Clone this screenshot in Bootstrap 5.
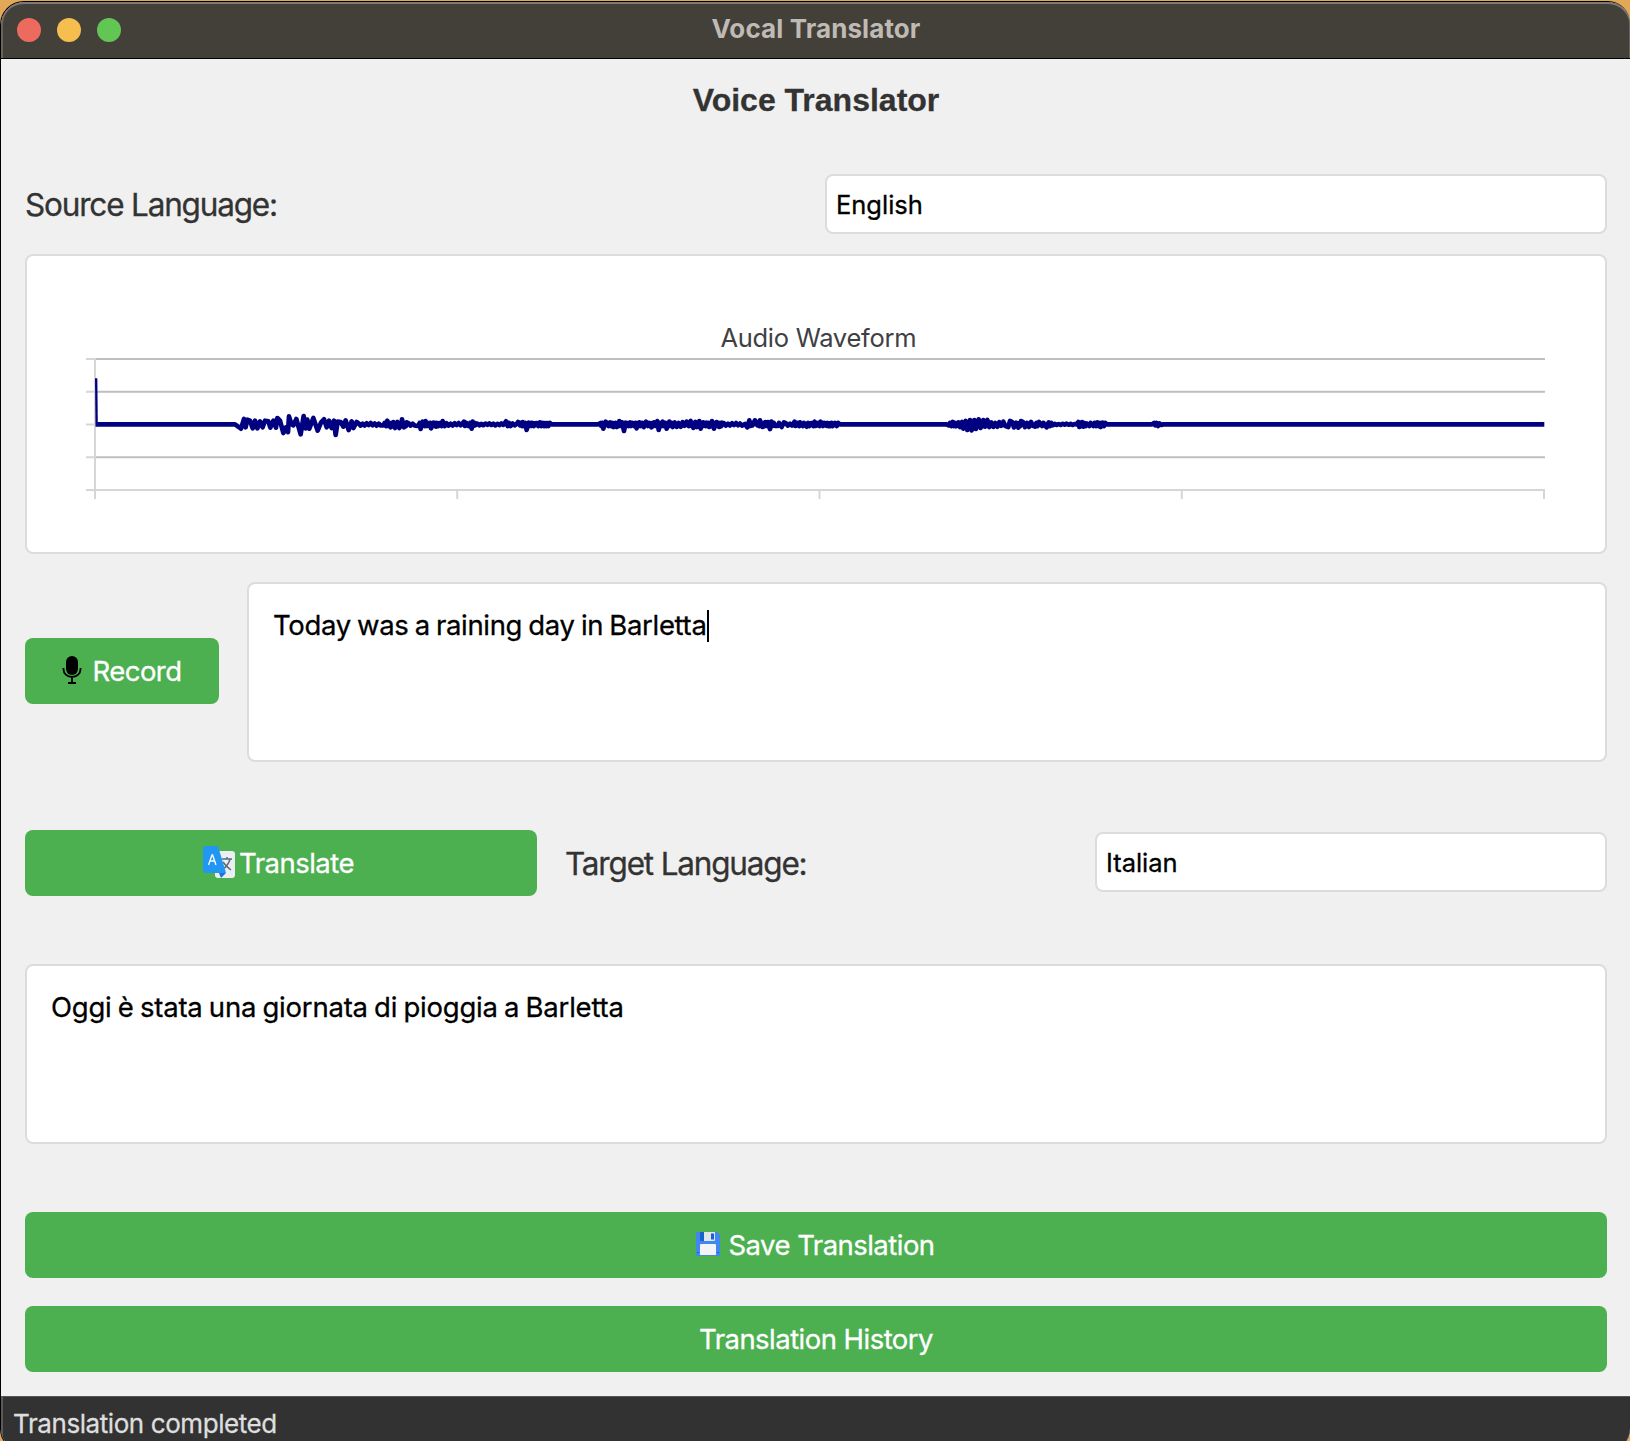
<!DOCTYPE html>
<html lang="en">
<head>
<meta charset="utf-8">
<meta name="viewport" content="width=device-width, initial-scale=1">
<title>Vocal Translator</title>
<link href="https://cdn.jsdelivr.net/npm/bootstrap@5.3.0/dist/css/bootstrap.min.css" rel="stylesheet">
<style>
  body { background: #e3a857; font-family: Inter, "Liberation Sans", sans-serif; color: #333; height: 1441px; overflow: hidden; line-height: 1.2; -webkit-text-stroke: .3px currentColor; }
  .desk { height: 1441px; padding: 1px 0 0 0; overflow: hidden; }
  .app-window { height: 1450px; border: 1px solid #000; border-right: 0; border-radius: 24px 22px 22px 22px; background: #f0f0f0; overflow: hidden; }
  .title-bar { height: 57px; background: #433f39; border-bottom: 1px solid #000; box-shadow: inset 0 2px 0 #7d7b74, inset 2px 0 0 #67635d, inset -1px 0 0 #67635d; border-radius: 23px 22px 0 0; padding: 0 15px 0 16px; color: #bfbab4; flex: none; }
  .title-text { font-size: 26px; font-weight: 700; letter-spacing: .1px; padding-bottom: 3px; -webkit-text-stroke: 0; }
  .light { width: 24px; height: 24px; border-radius: 50%; }
  .lights { gap: 16px; width: 140px; }
  .red { background: #ed6a5f; } .amber { background: #f5be4f; } .green { background: #62c655; }
  .content { height: 1337px; padding: 0 23px 0 24px; flex: none; }
  .heading { font: bold 32px/40px "Liberation Sans", Arial, sans-serif; margin: 21px 0 0; height: 94px; text-align: center; }
  .field-label { font-size: 31.5px; letter-spacing: -1.18px; white-space: nowrap; padding-top: 1px; }
  .form-control.field, .panel { border: 2px solid #dcdcdc; border-radius: 8px; background: #fff; color: #000; }
  .form-control.field { height: 60px; font-size: 25.5px; padding: 1px 9px 0; letter-spacing: -.02px; }
  .source-field { width: 782px; } .target-field { width: 512px; margin-top: -2px; }
  .wave-panel { height: 300px; margin-top: 20px; }
  .wave-panel svg { display: block; width: 1578px; height: 296px; }
  .text-panel { height: 180px; font-size: 27.5px; letter-spacing: -.33px; word-spacing: -1.2px; padding: 24px; line-height: 34px; }
  .caret { display: inline-block; width: 2px; height: 32px; background: #000; vertical-align: -7px; margin-top: -2px; }
  .btn.action { background: #4caf50; border: 0; border-radius: 8px; color: #fff; height: 66px; font-size: 27.5px; letter-spacing: -.53px; padding: 2px 0 0; display: flex; align-items: center; justify-content: center; }
  .record { width: 194px; margin-top: -2px; } .translate { width: 512px; }
  .speech-row { margin-top: 28px; gap: 28px; }
  .language-row { margin-top: 68px; height: 66px; }
  .target-label { margin-left: 24px; }
  .text-panel.output { margin-top: 68px; letter-spacing: -.22px; }
  .save { margin-top: 68px; } .history { margin-top: 28px; }
  .mic-icon { margin: -5px 10px 0 0; }
  .translate-icon { margin: -4px 4px 0 -5px; }
  .disk-icon { margin: -4px 8px 0 -1px; }
  .status { height: 54px; background: #323232; border-top: 1px solid #555; box-shadow: inset 2px 0 0 #5b5b5b; color: #dedede; font-size: 26px; padding: 11px 0 0 12px; letter-spacing: -.42px; flex: none; }
</style>
<script src="https://cdn.jsdelivr.net/npm/bootstrap@5.3.0/dist/js/bootstrap.bundle.min.js"></script>
</head>
<body>
<div class="desk">
<div class="app-window d-flex flex-column">
  <header class="title-bar d-flex align-items-center justify-content-between">
    <div class="lights d-flex"><span class="light red"></span><span class="light amber"></span><span class="light green"></span></div>
    <div class="title-text">Vocal Translator</div>
    <div class="lights"></div>
  </header>
  <main class="content">
    <h1 class="heading">Voice Translator</h1>
    <div class="d-flex align-items-center justify-content-between">
      <label class="field-label" for="source">Source Language:</label>
      <input id="source" class="form-control field source-field" value="English">
    </div>
    <section class="panel wave-panel">
      <svg viewBox="27 256 1578 296">
        <path d="M95 359H1545M95 391.7H1545M95 457.3H1545" stroke="#bfbfbf" stroke-width="2"/>
        <path d="M86 359H95M86 391.7H95M86 424.4H95M86 457.3H95M86 490H1545M95 358V499M457.2 490V499M819.5 490V499M1181.8 490V499M1544 490V499" stroke="#d6d6d6" stroke-width="2" fill="none"/>
        <text x="818.3" y="346.5" text-anchor="middle" font-size="25.5" letter-spacing="-.28" fill="#404044">Audio Waveform</text>
        <g transform="translate(60 340) scale(.33333)" fill="none" stroke="#000080"><path d="M108.500 115L110 260" stroke-width="7"/><polyline id="wave" stroke-width="14" stroke-linejoin="round"/></g>
      </svg>
    </section>
    <div class="speech-row d-flex align-items-center">
      <button class="btn action record flex-shrink-0" type="button">
        <svg class="mic-icon" width="20" height="30" viewBox="0 0 20 30"><rect x="4" y="1" width="12" height="19" rx="6"/><path d="M1.500 13v1.500a8.200 7.200 0 0 0 17 0V13M10 22v6M6 28h8" fill="none" stroke="#000" stroke-width="1.8"/></svg>Record
      </button>
      <div class="panel text-panel flex-grow-1">Today was a raining day in Barletta<span class="caret"></span></div>
    </div>
    <div class="language-row d-flex align-items-center">
      <button class="btn action translate flex-shrink-0" type="button">
        <svg class="translate-icon" width="32" height="32" viewBox="0 0 32 32"><rect x="12" y="5" width="20" height="27" rx="3" fill="#eceff1"/><path d="M16 27h7l-5 5z" fill="#1976d2"/><path d="M19 13h10M24 11v2M27 13c-1 5-4 8-8 11M20 16c2 3 4 5 8 8" stroke="#546e7a" stroke-width="1.5" fill="none"/><path d="M3 0H15L23 27H3Q0 27 0 24V3Q0 0 3 0z" fill="#2196f3"/><path d="M5.500 19L9 9h.6l3.400 10M7 15h5" fill="none" stroke="#fff" stroke-width="1.3"/></svg>Translate
      </button>
      <label class="field-label target-label flex-grow-1 ps-1" for="target">Target Language:</label>
      <input id="target" class="form-control field target-field" value="Italian">
    </div>
    <div class="panel text-panel output">Oggi è stata una giornata di pioggia a Barletta</div>
    <button class="btn action save w-100" type="button">
      <svg class="disk-icon" width="24" height="24" viewBox="0 0 24 24"><path d="M1 0H21L24 3V23Q24 24 23 24H1Q0 24 0 23V1Q0 0 1 0z" fill="#4285f4"/><path d="M4 0h4v9H5q-1 0-1-1z" fill="#1762c5"/><path d="M8 0h11v8q0 1-1 1H8z" fill="#e1e5e8"/><path d="M15 1.500h3v6h-3z" fill="#1762d1"/><path d="M4 24V13q0-1 1-1h14q1 0 1 1v11z" fill="#f2f4f5"/><path d="M1 20h2v1H1M21 20h2v1h-2M4 23.300h16v.7H4z" fill="#1762d1"/></svg>Save Translation
    </button>
    <button class="btn action history w-100" type="button">Translation History</button>
  </main>
  <footer class="status">Translation completed</footer>
</div>
</div>
<script>
  // Recorded samples as x,y pairs; "~" fills the gap to the next pair with low ripple of the given height
  const samples = `112,253 525,253 543,266 552,237 557,262 562,239 570,242 578,265 585,242 592,265 600,244 608,262 615,242 625,244 631,263 640,242 648,263 652,234 660,242 670,279 678,262 684,276 687,229 694,252 700,256 709,237 722,283 731,228 737,265 742,239 748,266 760,234 773,272 783,248 792,238 800,262 807,242 815,264 822,242 827,285 833,245 842,246 850,260 857,241 866,270 875,244 880,264 890,246
  ~4 970,256 982,242 992,262 1000,246 1005,264 1012,246 1018,264 1026,238 1032,262 1040,247 ~4 1072,258 1082,267 1088,245 1097,243 1105,258 1113,265 1120,248 1128,260 1138,250 1148,243 1154,258 ~4 1212,245 1222,256 1235,266 1238,245 1246,256 ~3 1338,244 1352,258 ~3 1374,246 1380,256 1388,246 1400,270 1406,248 1414,258 1425,250 1440,247 1452,258 1460,249 1475,253 1615,253
  1622,249 1630,266 1637,245 1650,247 1660,261 1670,261 1678,243 1686,247 1692,273 1697,248 1710,247 1720,256 1730,265 1738,247 1752,261 1758,245 1774,262 1782,247 1792,243 1796,270
  1808,245 1820,266 1828,245 1838,261 ~8 1892,243 1900,264 1906,246 1910,261 1918,243 1922,266 1930,247 1940,248 1948,261 1956,243 1962,266 1970,246 1978,261 1986,248 ~4 2055,252 2062,262 2068,241 2078,256 2085,241 2092,256 2100,241 2108,261 2116,246 2124,246 2130,267 2134,245 2145,258 2165,261 2172,247 ~4 2204,245 2212,256 2220,247 2240,260 2252,250 2264,245 2272,256 2282,245 2300,257 2308,250 2318,258 2325,249 2340,253
  2660,253 2666,256 2678,246 2688,259 2695,247 2700,261 2706,246 2710,266 2717,243 2722,270 2730,240 2735,271 2743,240 2748,267 2756,238 2762,264 2770,240 2775,260 2782,240 2788,261 ~8 2845,261 2850,243 ~10 2875,263 2883,243 ~9 2925,260 2937,246 2960,262 2966,247 2978,256 ~2 3050,253 3055,246 3058,261 3066,246 3070,260 3080,250 3100,258 3112,247 3122,261 3128,248 3140,253 3276,253 3282,249 3286,256 3298,250 3304,255 3310,253 4453,253`;
  const points = [];
  let ripple = 0;
  for (const token of samples.trim().split(/\s+/)) {
    if (token[0] === "~") { ripple = Number(token.slice(1)); continue; }
    const [x, y] = token.split(",").map(Number);
    const last = points[points.length - 1];
    if (ripple) {
      let up = -1, i = 0;
      for (let px = last[0] + 6; px < x - 3; px += 6, up = -up, i++) {
        points.push([px, 253 + up * ripple * (0.75 + 0.25 * Math.sin(i * 2.3))]);
      }
      ripple = 0;
    } else if (last && x > 900 && x - last[0] > 7 && x - last[0] < 25) {
      // secondary oscillation inside a wider step
      const mid = (last[0] + x) / 2;
      points.push([mid - 2, y < 253 ? 249 : 258], [mid + 2, y < 253 ? 258 : 249]);
    }
    points.push([x, y]);
  }
  document.getElementById("wave").setAttribute("points", points.map(p => p.join(",")).join(" "));
</script>
</body>
</html>
